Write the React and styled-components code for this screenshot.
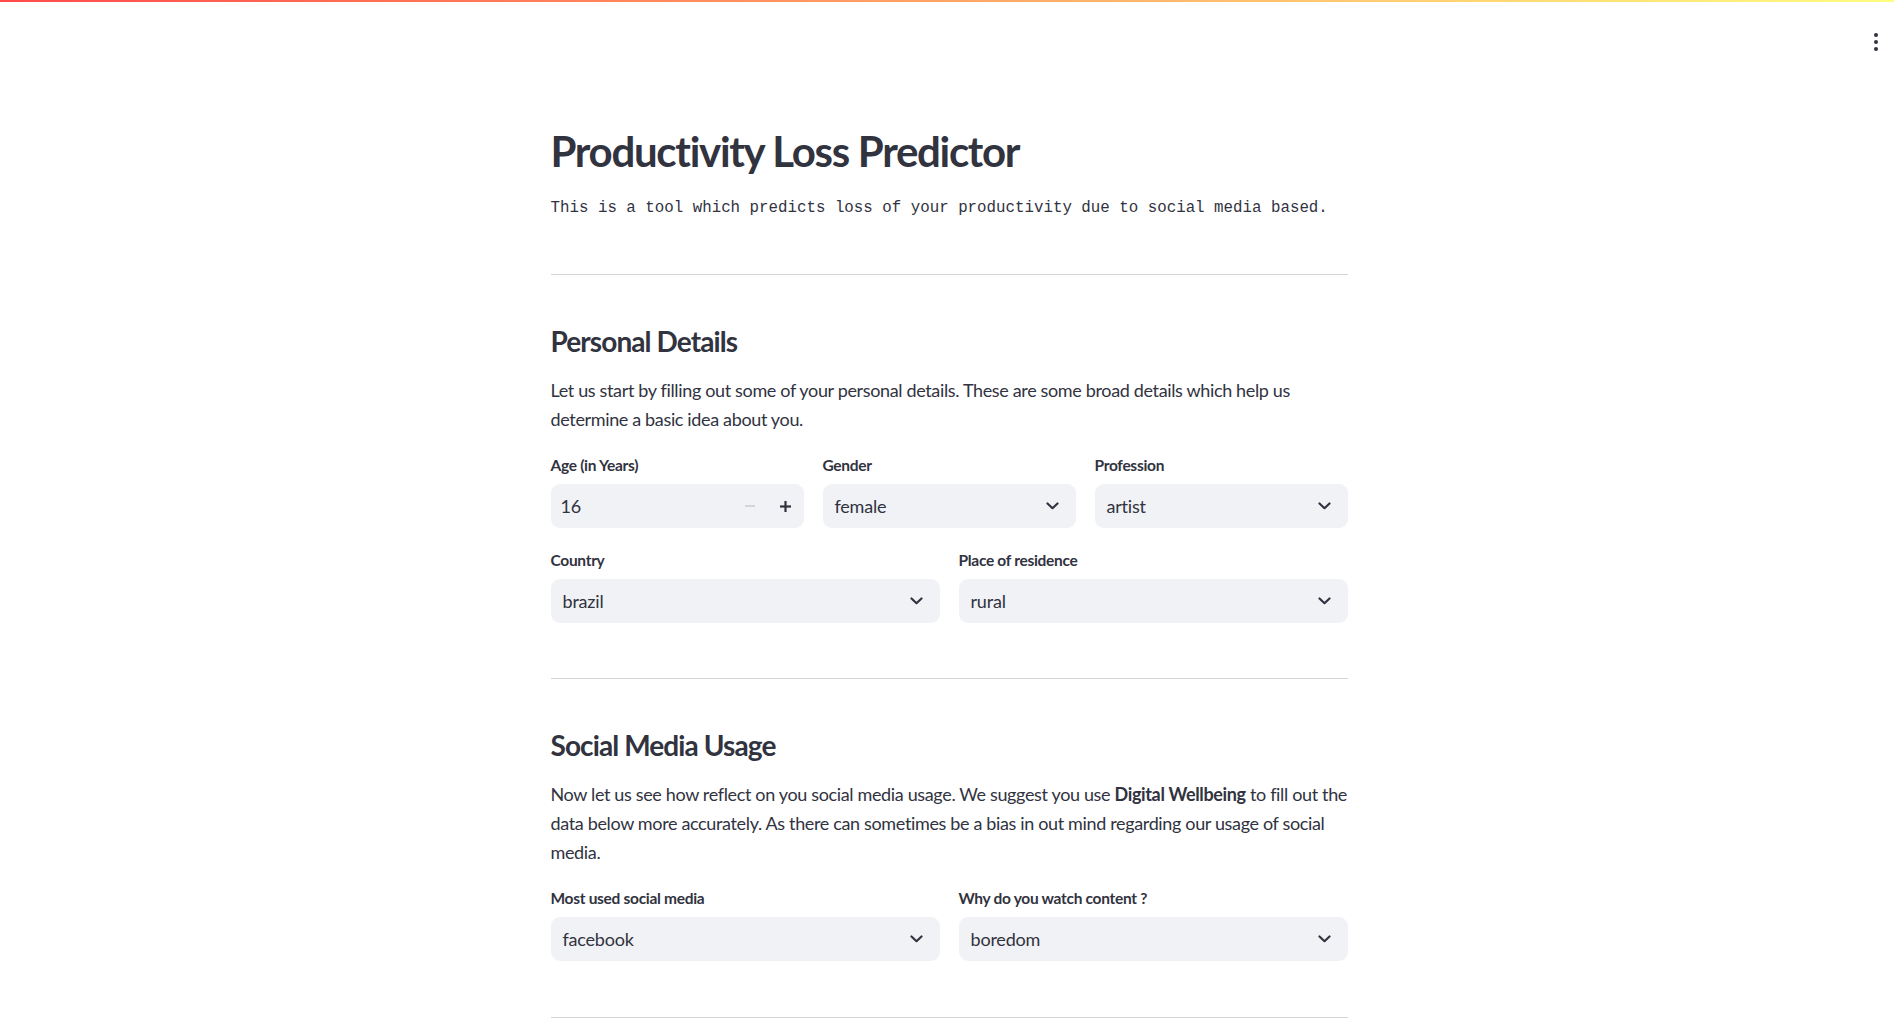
import React from "react";
import styled, { createGlobalStyle } from "styled-components";

const Global = createGlobalStyle`
  html, body { margin: 0; padding: 0; background: #ffffff; }
  body {
    font-family: Lato, "Noto Sans", sans-serif;
    color: #31333f;
    -webkit-font-smoothing: antialiased;
  }
  * { box-sizing: border-box; }
`;

const TopBar = styled.div`
  height: 2px;
  background: linear-gradient(90deg, #ff4b4b 0%, #fffd80 100%);
`;

const Header = styled.header`
  display: flex;
  justify-content: flex-end;
  height: 0;
  position: relative;
`;

const MenuButton = styled.button`
  position: absolute;
  top: 26px;
  right: 8px;
  width: 20px;
  height: 28px;
  border: none;
  background: transparent;
  display: flex;
  flex-direction: column;
  align-items: center;
  justify-content: center;
  gap: 3px;
  padding: 0;
  cursor: pointer;
`;

const Dot = styled.span`
  width: 4px;
  height: 4px;
  border-radius: 50%;
  background: #31333f;
`;

const Main = styled.main`
  width: 797px;
  margin: 0 auto;
  padding: 119px 0 40px;
  transform: translateX(2px);
`;

const Title = styled.h1`
  margin: 0;
  font-size: 42px;
  line-height: 60px;
  font-weight: 700;
  letter-spacing: -1.3px;
  color: #31333f;
`;

const Subtitle = styled.p`
  margin: 15px 0 0;
  font-family: "Liberation Mono", "DejaVu Sans Mono", monospace;
  font-size: 15.8px;
  line-height: 24px;
  color: #31333f;
`;

const Divider = styled.hr`
  border: none;
  border-bottom: 1px solid rgba(49, 51, 63, 0.2);
  margin: ${(p) => p.$top}px 0 0;
  height: 0;
`;

const SectionTitle = styled.h3`
  margin: ${(p) => p.$top}px 0 0;
  font-size: 28px;
  line-height: 38px;
  font-weight: 700;
  letter-spacing: -0.9px;
  color: #31333f;
`;

const Paragraph = styled.p`
  margin: 16px 0 0;
  font-size: 18px;
  line-height: 29px;
  letter-spacing: -0.35px;
  color: #31333f;
  strong { font-weight: 700; }
`;

const Row = styled.div`
  display: grid;
  grid-template-columns: repeat(${(p) => p.$cols}, 1fr);
  column-gap: 19px;
  margin-top: ${(p) => p.$top}px;
`;

const Field = styled.div`
  display: flex;
  flex-direction: column;
`;

const Label = styled.label`
  font-size: 15.5px;
  line-height: 20px;
  font-weight: 700;
  letter-spacing: -0.3px;
  color: #31333f;
  margin-bottom: 9px;
`;

const Box = styled.div`
  height: 44px;
  border-radius: 9px;
  background: #f0f2f6;
  display: flex;
  align-items: center;
  padding: 0 17px 0 12px;
  font-size: 18px;
  letter-spacing: -0.2px;
  color: #31333f;
`;

const Value = styled.span`
  flex: 1;
`;

const StepButton = styled.span`
  width: 36px;
  display: flex;
  justify-content: center;
  align-items: center;
  color: ${(p) => (p.$disabled ? "#d4d6dc" : "#31333f")};
`;

const NumberBox = styled(Box)`
  padding-right: 0;
  padding-left: 10px;
`;

const Chevron = () => (
  <svg width="13" height="8" viewBox="0 0 13 8" fill="none">
    <path d="M1.5 1.5 L6.5 6.2 L11.5 1.5" stroke="#31333f" strokeWidth="2.2" strokeLinecap="round" strokeLinejoin="round" />
  </svg>
);

const Select = ({ label, value }) => (
  <Field>
    <Label>{label}</Label>
    <Box>
      <Value>{value}</Value>
      <Chevron />
    </Box>
  </Field>
);

const NumberInput = ({ label, value }) => (
  <Field>
    <Label>{label}</Label>
    <NumberBox>
      <Value>{value}</Value>
      <StepButton $disabled>
        <svg width="10" height="2" viewBox="0 0 10 2"><rect width="10" height="2" fill="currentColor" /></svg>
      </StepButton>
      <StepButton>
        <svg width="11" height="11" viewBox="0 0 11 11"><rect x="4.4" width="2.2" height="11" fill="currentColor" /><rect y="4.4" width="11" height="2.2" fill="currentColor" /></svg>
      </StepButton>
    </NumberBox>
  </Field>
);

export default function App() {
  return (
    <>
      <Global />
      <TopBar />
      <Header>
        <MenuButton aria-label="menu">
          <Dot />
          <Dot />
          <Dot />
        </MenuButton>
      </Header>
      <Main>
        <Title>Productivity Loss Predictor</Title>
        <Subtitle>This is a tool which predicts loss of your productivity due to social media based.</Subtitle>
        <Divider $top={54} />

        <SectionTitle $top={47}>Personal Details</SectionTitle>
        <Paragraph>
          Let us start by filling out some of your personal details. These are some broad details which help us determine a basic idea about you.
        </Paragraph>
        <Row $cols={3} $top={21}>
          <NumberInput label="Age (in Years)" value="16" />
          <Select label="Gender" value="female" />
          <Select label="Profession" value="artist" />
        </Row>
        <Row $cols={2} $top={22}>
          <Select label="Country" value="brazil" />
          <Select label="Place of residence" value="rural" />
        </Row>
        <Divider $top={55} />

        <SectionTitle $top={47}>Social Media Usage</SectionTitle>
        <Paragraph>
          Now let us see how reflect on you social media usage. We suggest you use <strong>Digital Wellbeing</strong> to fill out the data below more accurately. As there can sometimes be a bias in out mind regarding our usage of social media.
        </Paragraph>
        <Row $cols={2} $top={21}>
          <Select label="Most used social media" value="facebook" />
          <Select label="Why do you watch content ?" value="boredom" />
        </Row>
        <Divider $top={56} />
      </Main>
    </>
  );
}
